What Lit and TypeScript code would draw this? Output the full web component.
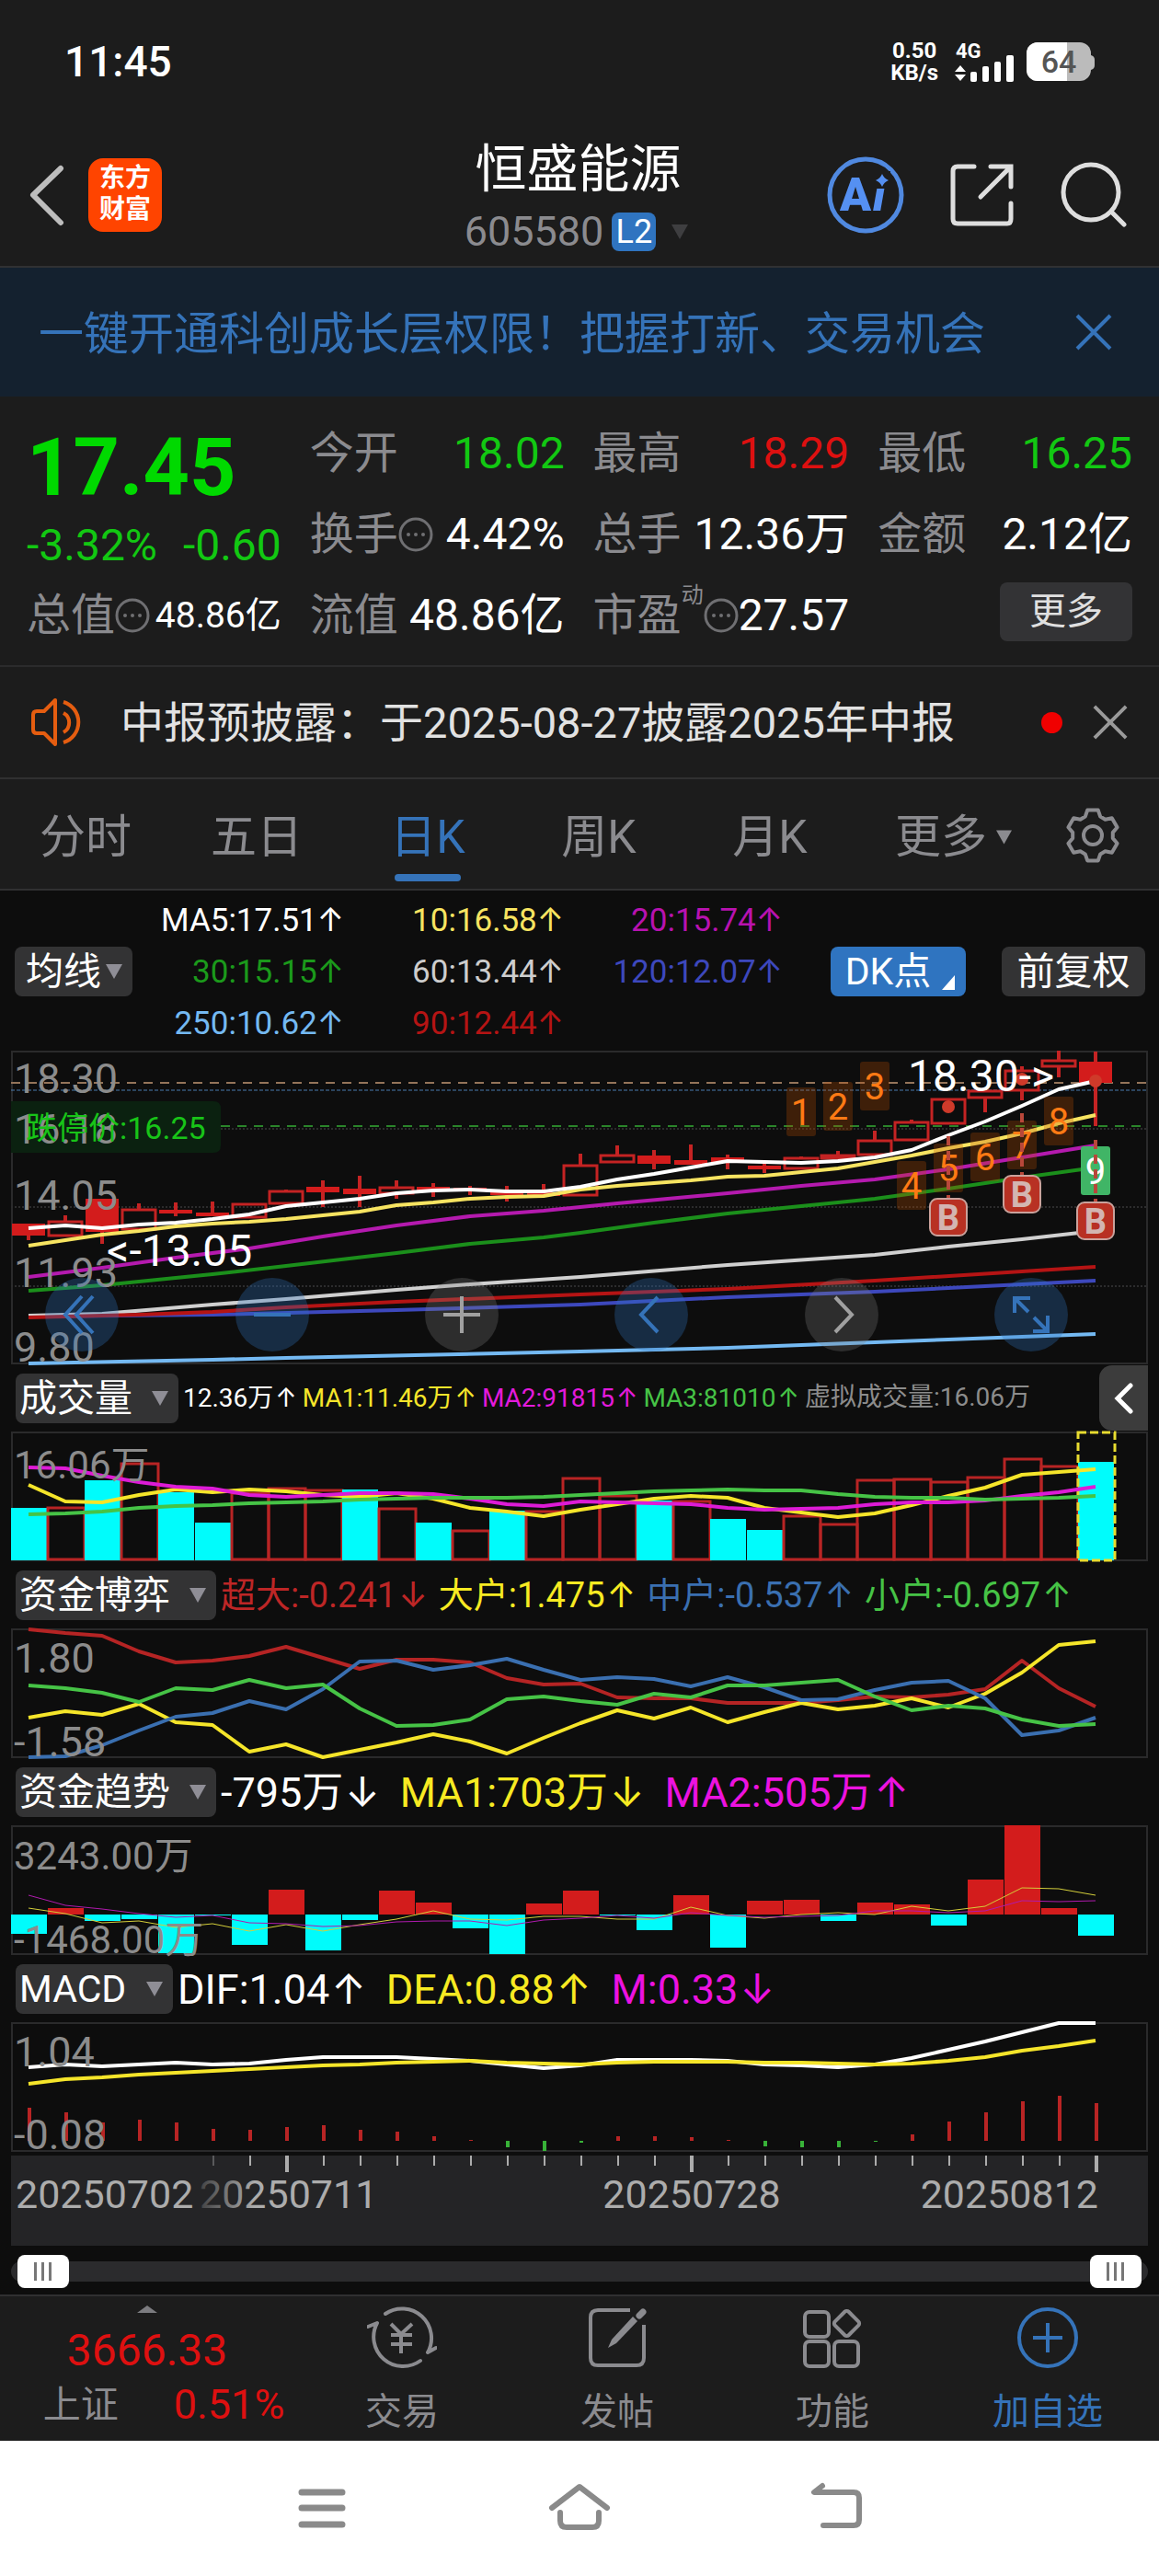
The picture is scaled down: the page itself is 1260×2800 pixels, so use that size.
import { LitElement, html, svg, css, nothing } from "lit";
import { customElement, state } from "lit/decorators.js";

type Candle = [open: number, close: number, high: number, low: number, hollow: 0 | 1];
type Reading = { text: string; arrow?: "↑" | "↓"; tone: string };
type Point = [index: number, y: number];

const STEP = 40;
const FIRST = 19;
const xAt = (i: number) => FIRST + i * STEP;

/* body top, body bottom, wick top, wick bottom, hollow */
const CANDLES: Candle[] = [
  [188, 201, 188, 206, 0], [185, 202, 179, 202, 1], [161, 197, 161, 210, 0], [172, 195, 166, 195, 1],
  [173, 177, 165, 180, 0], [176, 180, 164, 180, 0], [166, 182, 166, 182, 1], [152, 167, 151, 167, 1],
  [148, 154, 141, 170, 0], [150, 156, 136, 170, 0], [148, 156, 141, 161, 1], [148, 152, 144, 159, 0],
  [149, 153, 147, 157, 0], [153, 157, 147, 164, 0], [154, 158, 145, 158, 0], [124, 158, 112, 158, 1],
  [113, 122, 103, 122, 1], [114, 123, 108, 129, 0], [119, 124, 102, 124, 0], [116, 121, 113, 129, 0],
  [125, 129, 121, 133, 0], [116, 129, 115, 129, 1], [113, 118, 109, 118, 1], [97, 114, 87, 114, 1],
  [77, 98, 75, 98, 1], [52, 80, 52, 80, 1], [43, 52, 43, 67, 1], [21, 44, 17, 54, 1],
  [10, 18, 0, 29, 1], [12, 35, 1, 82, 0],
];

const full = (ys: number[]): Point[] => ys.map((y, i) => [i, y]);

const PRICE_LINES: { tone: string; points: Point[] }[] = [
  { tone: "#74b9f2", points: [[0, 340], [5, 336], [7, 334], [15, 327], [19, 323], [25, 314], [29, 308]] },
  { tone: "#3d48bd", points: [[0, 289], [5, 287], [10, 282], [15, 276], [19, 268], [23, 262], [27, 254], [29, 250]] },
  { tone: "#d0d0d0", points: [[0, 288], [2, 286], [5, 276], [7, 270], [10, 260], [12, 254], [15, 246], [19, 233], [23, 222], [25, 213], [27, 205], [29, 196]] },
  { tone: "#b51414", points: [[0, 290], [3, 287], [5, 284], [7, 279], [10, 273], [15, 265], [19, 259], [23, 250], [27, 240], [29, 235]] },
  { tone: "#1b8f1b", points: [[0, 261], [2, 255], [5, 243], [7, 234], [10, 220], [12, 210], [14, 203], [15, 198], [17, 187], [19, 177], [21, 169], [23, 161], [25, 150], [27, 138], [29, 127]] },
  { tone: "#b41aae", points: [[0, 246], [2, 236], [4, 225], [6, 215], [8, 202], [10, 190], [12, 180], [14, 174], [16, 166], [19, 155], [21, 147], [23, 140], [25, 129], [27, 116], [29, 103]] },
  { tone: "#f7e461", points: full([212, 206, 200, 196, 191, 188, 186, 183, 179, 175, 168, 165, 161, 159, 158, 151, 147, 144, 141, 137, 136, 132, 128, 121, 114, 106, 99, 90, 79, 70]) },
  { tone: "#ffffff", points: full([193, 190, 193, 189, 187, 183, 178, 169, 165, 161, 155, 152, 151, 153, 153, 148, 140, 134, 127, 120, 121, 122, 120, 116, 108, 92, 77, 60, 42, 33]) },
];

/* index, label, top of the box */
const COUNTS: [number, string, number][] = [
  [21, "1", 40], [22, "2", 34], [23, "3", 12], [24, "4", 120], [25, "5", 101], [26, "6", 89], [27, "7", 76], [28, "8", 50], [29, "9", 104],
];

/* index, dot y, stem top, badge top */
const BUYS: [number, number, number, number][] = [[25, 61, 93, 160], [27, 31, 68, 135], [29, 33, 97, 164]];

const VOLUME_TOPS = [83, 82, 53, 34, 66, 99, 66, 61, 63, 63, 83, 99, 107, 86, 86, 50, 69, 75, 75, 95, 107, 91, 100, 52, 51, 54, 49, 29, 37, 33];
const VOLUME_DOWN = new Set([0, 2, 4, 5, 9, 11, 13, 17, 19, 20, 29]);
const VOLUME_LINES = [
  { tone: "#f5e52a", points: full([58, 76, 77, 69, 63, 66, 63, 65, 69, 71, 67, 73, 83, 87, 92, 85, 79, 73, 70, 72, 83, 88, 93, 89, 80, 70, 61, 47, 44, 41]) },
  { tone: "#dd1bd6", points: full([39, 40, 48, 55, 60, 62, 69, 71, 69, 67, 67, 68, 73, 79, 81, 76, 77, 78, 79, 83, 85, 84, 83, 79, 77, 77, 75, 70, 66, 60]) },
  { tone: "#46c346", points: full([90, 89, 87, 83, 81, 80, 78, 77, 76, 74, 73, 72, 72, 72, 71, 69, 67, 65, 64, 63, 64, 64, 68, 71, 72, 72, 74, 73, 72, 70]) },
];

const GAME_LINES = [
  { tone: "#b52424", points: full([1, 5, 8, 25, 37, 35, 30, 20, 32, 44, 34, 34, 37, 54, 61, 60, 75, 76, 76, 81, 81, 81, 78, 74, 75, 72, 66, 35, 65, 85]) },
  { tone: "#f5e52a", points: full([97, 90, 94, 82, 102, 105, 134, 126, 140, 132, 124, 115, 123, 136, 119, 103, 89, 98, 86, 102, 91, 81, 88, 84, 76, 86, 71, 48, 18, 14]) },
  { tone: "#3a6fb0", points: full([140, 139, 127, 111, 96, 92, 79, 88, 66, 36, 35, 45, 40, 33, 45, 56, 53, 55, 63, 53, 64, 78, 77, 67, 59, 57, 76, 116, 111, 97]) },
  { tone: "#46c346", points: full([62, 65, 70, 80, 65, 67, 56, 65, 61, 87, 106, 105, 99, 77, 74, 79, 83, 71, 75, 62, 62, 59, 56, 74, 89, 84, 87, 99, 106, 104]) },
];

const TREND_ZERO = 97;
const TREND_BARS = [118, 90, 104, 102, 139, 98, 130, 70, 136, 103, 71, 84, 112, 140, 85, 71, 98, 114, 76, 133, 82, 81, 104, 84, 86, 109, 59, 0, 90, 120];
const TREND_LINES = [
  { tone: "#d4cf3a", points: full([90, 96, 106, 104, 111, 107, 115, 108, 115, 108, 102, 93, 102, 103, 99, 99, 102, 102, 89, 98, 101, 97, 95, 97, 88, 93, 88, 68, 69, 76]) },
  { tone: "#b01aae", points: full([76, 87, 91, 96, 100, 98, 106, 107, 110, 109, 105, 104, 104, 109, 103, 101, 98, 101, 95, 98, 100, 99, 98, 93, 93, 95, 93, 82, 83, 82]) },
];

const MACD_ZERO = 129;
const MACD_BARS = [93, 98, 109, 106, 109, 116, 117, 114, 112, 117, 119, 124, 128, 136, 140, 131, 124, 124, 125, 128, 135, 136, 136, 130, 122, 108, 98, 86, 80, 88];
const MACD_LINES = [
  { tone: "#ffffff", points: full([49, 46, 48, 46, 44, 46, 45, 41, 38, 38, 38, 40, 42, 46, 50, 47, 41, 41, 41, 42, 46, 47, 49, 46, 39, 30, 21, 11, 1, 1]) },
  { tone: "#f5e52a", points: full([67, 62, 60, 57, 55, 53, 51, 49, 47, 46, 44, 43, 42, 44, 45, 46, 44, 43, 43, 43, 44, 44, 45, 46, 45, 42, 38, 31, 26, 20]) },
];

const AVERAGES: Reading[] = [
  { text: "MA5:17.51", tone: "#ffffff" }, { text: "10:16.58", tone: "#f7e461" }, { text: "20:15.74", tone: "#b812b0" },
  { text: "30:15.15", tone: "#1b9a1b" }, { text: "60:13.44", tone: "#cdcdcd" }, { text: "120:12.07", tone: "#3d48bd" },
  { text: "250:10.62", tone: "#74b9f2" }, { text: "90:12.44", tone: "#b51414" },
];

const TABS = ["分时", "五日", "日K", "周K", "月K", "更多"];

const gearPath = (() => {
  const pts: string[] = [];
  const at = (r: number, deg: number) => {
    const a = (deg * Math.PI) / 180;
    return `${(31 + r * Math.cos(a)).toFixed(1)} ${(31 + r * Math.sin(a)).toFixed(1)}`;
  };
  for (let k = 0; k < 6; k++) {
    const a = -90 + k * 60;
    pts.push(at(22, a - 22), at(28, a - 12), at(28, a + 12), at(22, a + 22));
  }
  return `M${pts.join("L")}Z`;
})();

const line = (l: { tone: string; points: Point[] }, width = 4) => svg`
  <polyline fill="none" stroke=${l.tone} stroke-width=${width} stroke-linejoin="round"
    points=${l.points.map(([i, y]) => `${xAt(i)},${y}`).join(" ")}></polyline>`;

const frame = (h: number) => svg`<rect class="frame" x="1" y="1" width="1234" height=${h - 2}></rect>`;

const caret = html`<svg class="caret" viewBox="0 0 18 16" aria-hidden="true"><path d="M0 0H18L9 16Z"></path></svg>`;
const more = html`<svg class="dots" viewBox="0 0 38 38" aria-hidden="true">
  <circle cx="19" cy="19" r="17" fill="none" stroke="currentColor" stroke-width="3"></circle>
  <circle cx="11" cy="19" r="2"></circle><circle cx="19" cy="19" r="2"></circle><circle cx="27" cy="19" r="2"></circle>
</svg>`;

@customElement("app-root")
export class AppRoot extends LitElement {
  @state() private tab = "日K";
  @state() private bannerOpen = true;
  @state() private noticeOpen = true;

  static styles = css`
    :host {
      display: block;
      background: #1c1c1c;
      color: #fff;
      font-family: Roboto, "Noto Sans CJK SC", sans-serif;
      font-size: 48px;
      line-height: 1;
    }
    * { box-sizing: border-box; }
    button, select { font: inherit; color: inherit; background: none; border: 0; padding: 0; margin: 0; cursor: pointer; }
    a { color: inherit; text-decoration: none; }
    svg { display: block; flex: none; }
    .green { color: #12c812; }
    .red { color: #de1010; }

    .status { display: flex; align-items: center; height: 134px; padding: 0 70px; }
    .clock { font-size: 46px; font-weight: 500; flex: 1; }
    .net { font-size: 24px; line-height: 24px; font-weight: 700; text-align: center; margin-right: 18px; }
    .signal { width: 66px; height: 44px; margin-right: 12px; overflow: visible; }
    .battery { width: 74px; height: 44px; }

    .head { display: grid; grid-template-columns: 1fr auto 1fr; align-items: center; height: 157px; padding: 0 35px 0 32px; border-bottom: 2px solid #303133; }
    .head .side { display: flex; align-items: center; }
    .head .right { justify-content: flex-end; gap: 50px; }
    .back { width: 44px; height: 70px; }
    .logo { width: 80px; height: 80px; margin-left: 20px; border-radius: 16px; background: #ff4400; font-size: 28px; line-height: 34px; font-weight: 700; text-align: center; padding: 5px 10px; }
    .title { text-align: center; padding-top: 12px; }
    h1 { margin: 0; font-size: 56px; line-height: 68px; font-weight: 400; }
    .code { display: flex; align-items: center; justify-content: center; gap: 9px; height: 68px; font-size: 45px; color: #8b8b8f; }
    .level { background: #2f74c0; color: #fff; border-radius: 8px; width: 48px; height: 42px; font-size: 36px; line-height: 42px; text-align: center; }
    .code .caret { width: 26px; height: 16px; margin-left: 4px; fill: #3e3e40; }
    .ai { width: 84px; height: 84px; }
    .ai text { font-weight: 900; font-size: 50px; }
    .share { width: 70px; height: 72px; }
    .find { width: 72px; height: 72px; }

    .banner { display: flex; align-items: center; justify-content: space-between; height: 140px; padding: 0 50px 0 42px; background: #14212f; color: #3573b9; font-size: 49px; }
    .banner a { padding-top: 5px; }
    .banner svg { width: 42px; height: 42px; }

    .quote { display: grid; grid-template-columns: repeat(4, 1fr); grid-template-rows: repeat(3, 88px); column-gap: 31px; padding: 18px 29px 10px; }
    .price { grid-row: span 2; display: flex; flex-direction: column; white-space: nowrap; }
    .last { font-size: 88px; font-weight: 700; line-height: 118px; color: #00d900; }
    .change { display: flex; justify-content: space-between; font-size: 48px; line-height: 52px; }
    .cell { display: flex; align-items: center; color: #8b8b8f; white-space: nowrap; }
    .cell b { font-weight: 400; margin-left: auto; color: #fff; }
    .cell b.green { color: #12c812; }
    .cell b.red { color: #de1010; }
    .cell.small b { font-size: 39px; }
    .cell sup { font-size: 24px; align-self: flex-start; margin-top: 10px; }
    .dots { width: 38px; height: 38px; fill: #6f6f72; color: #6f6f72; }
    .moredata { justify-self: end; margin-top: 8px; width: 144px; height: 64px; border-radius: 8px; background: #333335; color: #e0e0e0; font-size: 40px; }

    .notice { display: flex; align-items: center; height: 124px; padding: 0 33px; border-top: 2px solid #2b2b2c; border-bottom: 2px solid #303031; color: #e2e2e2; font-size: 47px; }
    .notice .horn { width: 62px; height: 54px; margin-right: 36px; }
    .notice a { flex: 1; white-space: nowrap; }
    .notice i { width: 23px; height: 23px; border-radius: 50%; background: #f00000; margin-right: 32px; }
    .notice .x { width: 40px; height: 40px; }

    .tabs { display: grid; grid-template-columns: repeat(6, 186fr) 144fr; height: 121px; border-bottom: 2px solid #303031; color: #8b8b8f; font-size: 50px; }
    .tabs button { display: flex; justify-content: center; align-items: center; position: relative; padding-top: 6px; }
    .tabs button:last-child { padding-top: 2px; }
    .tabs button[aria-selected="true"] { color: #3573b9; }
    .tabs button[aria-selected="true"]::after { content: ""; position: absolute; left: 57px; right: 57px; bottom: 8px; height: 8px; border-radius: 4px; background: #3573b9; }
    .tabs .caret { width: 17px; height: 16px; margin: 0 -27px 0 10px; fill: #8b8b8f; }
    .gear { width: 62px; height: 62px; }

    .charts { background: #0d0d0d; padding: 0 12px 2px; overflow: hidden; }
    .tools { display: flex; align-items: center; height: 174px; padding: 2px 3px 0 4px; }
    .averages { display: grid; grid-template-columns: 230px 239px 238px; grid-auto-rows: 56px; align-items: center; flex: 1; font-size: 35px; }
    .averages span { text-align: right; white-space: nowrap; }
    .arrow { font-family: Inter, sans-serif; margin-left: 2px; }
    .averages .arrow { margin-left: 0; }
    .pick { display: inline-grid; align-items: center; height: 54px; border-radius: 8px; background: #333334; color: #fff; font-size: 41px; flex: none; }
    .pick > * { grid-area: 1 / 1; }
    .pick select { appearance: none; height: 54px; line-height: 54px; padding: 0 50px 0 4px; outline: none; }
    .pick.tight select { padding: 0 34px 0 12px; }
    .pick .caret { width: 18px; height: 16px; fill: #8f8e96; justify-self: end; margin-right: 11px; pointer-events: none; }
    .pill { display: flex; align-items: center; justify-content: center; height: 54px; width: 156px; border-radius: 8px; background: #333334; font-size: 41px; white-space: nowrap; }
    .pill.dk { width: 147px; background: #2f74c0; margin-right: 39px; gap: 12px; padding-left: 4px; }
    .pill.dk svg { width: 14px; height: 16px; align-self: flex-end; margin-bottom: 7px; }

    .plot { position: relative; }
    .plot svg.canvas { width: 100%; height: auto; overflow: visible; }
    .frame { fill: none; stroke: #2a2a2b; stroke-width: 2; }
    .scale { fill: #8c8c8c; font-size: 45px; }
    .scale.wan { font-size: 42px; }
    .note { fill: #fff; font-size: 48px; }
    .controls { position: absolute; left: 3%; right: 7%; bottom: 4%; display: flex; justify-content: space-between; }
    .controls button { width: 80px; height: 80px; border-radius: 50%; background: rgba(47, 116, 192, 0.3); color: #3573b9; display: grid; place-content: center; }
    .controls button.grey { background: rgba(130, 130, 130, 0.28); color: #a0a0a0; }
    .controls svg { width: 44px; height: 44px; }

    .legend { display: flex; align-items: center; height: 73px; padding-left: 5px; white-space: nowrap; font-size: 45px; }
    .legend .readings { display: flex; gap: 22px; padding-left: 5px; flex: 1; }
    .legend.mid { font-size: 38px; }
    .legend.mid .readings { gap: 12px; }
    .legend.slim { font-size: 28px; }
    .legend.slim .readings { gap: 6px; }
    .fold { width: 53px; height: 71px; border-radius: 14px 0 0 14px; background: #3c3c3c; display: grid; place-content: center; }
    .fold svg { width: 30px; height: 44px; }

    .axis { margin-top: 4px; background: #242426; }
    .axis text { fill: #acacac; font-size: 43px; }
    .range { display: grid; align-items: center; height: 46px; margin-top: 5px; padding: 0 7px; }
    .range > * { grid-area: 1 / 1; }
    .track { height: 22px; border-radius: 11px; background: #2b2b2d; margin: 0 -7px; }
    .range input { appearance: none; width: 100%; height: 36px; margin: 0; background: none; pointer-events: none; }
    .range input::-webkit-slider-thumb {
      appearance: none; width: 56px; height: 36px; border-radius: 8px; pointer-events: auto;
      background: linear-gradient(90deg, #777 3px, transparent 3px 8px, #777 8px 11px, transparent 11px 16px, #777 16px 19px, transparent 19px) 18px 8px / 20px 20px no-repeat #fff;
    }

    .dock { display: grid; grid-template-columns: 320fr repeat(4, 234fr) 4fr; height: 159px; border-top: 2px solid #303031; color: #8b8b8f; font-size: 41px; }
    .index { display: grid; justify-items: center; align-content: start; padding-top: 10px; }
    .index .up { width: 22px; height: 8px; fill: #7c7c80; }
    .index strong { font-size: 48px; font-weight: 400; line-height: 48px; margin-top: 17px; }
    .index p { display: flex; gap: 60px; margin: 14px 0 0; padding-left: 36px; line-height: 42px; }
    .index p .red { font-size: 45px; }
    .dock a.item { display: grid; justify-items: center; align-content: start; gap: 24px; padding-top: 10px; font-size: 40px; }
    .dock a.item svg { width: 76px; height: 72px; }
    .dock a.add { color: #3573b9; }

    .system { display: flex; justify-content: center; align-items: center; gap: 200px; height: 147px; background: #fff; }
    .system button { padding-bottom: 4px; }
    .system svg { width: 80px; height: 60px; }
  `;

  private reading(r: Reading) {
    return html`<span style="color:${r.tone}">${r.text}${r.arrow ? html`<span class="arrow">${r.arrow}</span>` : nothing}</span>`;
  }

  private pick(name: string, tight = false) {
    return html`<label class="pick ${tight ? "tight" : ""}"><select aria-label=${name}><option>${name}</option></select>${caret}</label>`;
  }

  private closeIcon(tone: string) {
    return html`<svg viewBox="0 0 42 42" aria-hidden="true"><path d="M3 3L39 39M39 3L3 39" fill="none" stroke=${tone} stroke-width="4"></path></svg>`;
  }

  private header() {
    return html`
      <div class="status">
        <time class="clock">11:45</time>
        <div class="net">0.50<br />KB/s</div>
        <svg class="signal" viewBox="0 0 66 44" aria-label="4G">
          <text x="1" y="18" font-size="22" font-weight="700" fill="#fff">4G</text>
          <path fill="#fff" d="M0 33L6 26L12 33ZM0 36L6 43L12 36Z"></path>
          <g fill="#fff"><rect x="17" y="33" width="7" height="11" rx="2"></rect><rect x="30" y="27" width="7" height="17" rx="2"></rect>
          <rect x="43" y="22" width="7" height="22" rx="2"></rect><rect x="56" y="15" width="8" height="29" rx="2"></rect></g>
        </svg>
        <svg class="battery" viewBox="0 0 74 44" aria-label="64%">
          <path d="M12 1H58A12 12 0 0 1 70 13V31A12 12 0 0 1 58 43H12A12 12 0 0 1 0 31V13A12 12 0 0 1 12 1Z" fill="#bbb"></path>
          <path d="M12 1H44V43H12A12 12 0 0 1 0 31V13A12 12 0 0 1 12 1Z" fill="#fff"></path>
          <path d="M70 15Q74 16 74 20V26Q74 30 70 31Z" fill="#bbb"></path>
          <text x="35" y="34" text-anchor="middle" font-size="34" font-weight="500" fill="#555">64</text>
        </svg>
      </div>
      <header class="head">
        <div class="side">
          <button aria-label="返回"><svg class="back" viewBox="0 0 44 70" fill="none" stroke="#bdbdbd" stroke-width="6" stroke-linecap="round" stroke-linejoin="round"><path d="M34 6L4 35L34 65"></path></svg></button>
          <div class="logo">东方<br />财富</div>
        </div>
        <div class="title">
          <h1>恒盛能源</h1>
          <div class="code"><span>605580</span><span class="level">L2</span>${caret}</div>
        </div>
        <div class="side right">
          <button aria-label="智能助手"><svg class="ai" viewBox="0 0 84 84" fill="#5590f2">
            <circle cx="42" cy="42" r="39" fill="none" stroke="#5089e0" stroke-width="5"></circle>
            <text x="14" y="59">A<tspan x="50" font-style="italic">i</tspan></text>
            <rect x="49" y="16" width="20" height="19" fill="#1c1c1c"></rect>
            <path d="M60 19Q62 24 67 26Q62 28 60 33Q58 28 53 26Q58 24 60 19Z"></path>
          </svg></button>
          <button aria-label="分享"><svg class="share" viewBox="0 0 70 72" fill="none" stroke="#dedede" stroke-width="5" stroke-linecap="round">
            <path d="M26 5H8Q3 5 3 10V62Q3 67 8 67H62Q66 67 66 62V45"></path><path d="M44 5H66V27M65 6L33 38"></path>
          </svg></button>
          <button aria-label="搜索"><svg class="find" viewBox="0 0 72 72" fill="none" stroke="#dedede" stroke-width="5" stroke-linecap="round">
            <circle cx="33" cy="33" r="30"></circle><path d="M55 54L69 68"></path>
          </svg></button>
        </div>
      </header>`;
  }

  private quote() {
    return html`
      <section class="quote">
        <div class="price">
          <span class="last">17.45</span>
          <span class="change green"><span>-3.32%</span><span>-0.60</span></span>
        </div>
        <div class="cell">今开<b class="green">18.02</b></div>
        <div class="cell">最高<b class="red">18.29</b></div>
        <div class="cell">最低<b class="green">16.25</b></div>
        <div class="cell">换手${more}<b>4.42%</b></div>
        <div class="cell">总手<b>12.36万</b></div>
        <div class="cell">金额<b>2.12亿</b></div>
        <div class="cell small">总值${more}<b>48.86亿</b></div>
        <div class="cell">流值<b>48.86亿</b></div>
        <div class="cell">市盈<sup>动</sup>${more}<b>27.57</b></div>
        <button class="moredata">更多</button>
      </section>`;
  }

  private priceChart() {
    return html`<div class="plot">
      <svg class="canvas" viewBox="0 0 1236 341" role="img" aria-label="日K线">
        ${frame(341)}
        <g stroke="#2c2c2d" stroke-width="2" stroke-dasharray="2 2"><path d="M0 85H1236M0 170H1236M0 256H1236"></path></g>
        <path d="M0 35H1236" stroke="#94745a" stroke-width="2" stroke-dasharray="10 8"></path>
        <path d="M0 43H1236" stroke="#4a7cb0" stroke-width="1" stroke-dasharray="4 2"></path>
        <path d="M228 82H1236" stroke="#2a842a" stroke-width="2" stroke-dasharray="10 8"></path>
        <path d="M0 55H220Q228 55 228 63V103Q228 111 220 111H0Z" fill="#0b2110"></path>
        ${CANDLES.map(([top, bottom, high, low, hollow], i) => {
          const x = xAt(i);
          return hollow
            ? svg`<path d="M${x} ${high}V${top}M${x} ${bottom}V${low}" stroke="#c42323" stroke-width="4"></path>
                <rect x=${x - 18} y=${top + 1} width="36" height=${Math.max(bottom - top - 2, 2)} fill="none" stroke="#c42323" stroke-width="3"></rect>`
            : svg`<path d="M${x} ${high}V${low}" stroke="#c42323" stroke-width="4"></path>
                <rect x=${x - 18} y=${top} width="36" height=${bottom - top} fill="#d31c1c"></rect>`;
        })}
        ${PRICE_LINES.map((l) => line(l))}
        <g class="scale">
          <text x="3" y="46">18.30</text><text x="3" y="101">16.18</text><text x="3" y="173">14.05</text>
          <text x="3" y="257">11.93</text><text x="3" y="338">9.80</text>
        </g>
        <text x="16" y="96" font-size="34" fill="#18c418">跌停价:16.25</text>
        ${COUNTS.map(([i, n, top]) => svg`
          <rect x=${xAt(i) - 16} y=${top} width="32" height="53" rx="3" fill=${n === "9" ? "#40b566" : "rgba(190, 80, 0, 0.28)"}></rect>
          <text x=${xAt(i)} y=${top + 41} text-anchor="middle" font-size="40" fill=${n === "9" ? "#fff" : "#ff7a14"}>${n}</text>`)}
        ${BUYS.map(([i, dot, stem, top]) => svg`
          <circle cx=${xAt(i)} cy=${dot} r="7" fill="#cf3a2a"></circle>
          <path d="M${xAt(i)} ${stem}V${top}" stroke="#b8473a" stroke-width="4" stroke-dasharray="10 6"></path>
          <rect x=${xAt(i) - 20} y=${top + 1} width="40" height="40" rx="8" fill="#b83123" stroke="#c9a29c" stroke-width="2"></rect>
          <text x=${xAt(i)} y=${top + 35} text-anchor="middle" font-size="38" font-weight="700" fill="#d3b5b1">B</text>`)}
        <text class="note" x="104" y="234">&lt;-13.05</text>
        <text class="note" x="1134" y="44" text-anchor="end">18.30-&gt;</text>
      </svg>
      <div class="controls">
        <button aria-label="最早"><svg viewBox="0 0 44 44" fill="none" stroke="currentColor" stroke-width="4"><path d="M22 2L4 22L22 42M34 2L16 22L34 42"></path></svg></button>
        <button aria-label="缩小"><svg viewBox="0 0 44 44" stroke="currentColor" stroke-width="4"><path d="M2 22H42"></path></svg></button>
        <button class="grey" aria-label="放大"><svg viewBox="0 0 44 44" stroke="currentColor" stroke-width="4"><path d="M2 22H42M22 2V42"></path></svg></button>
        <button aria-label="前移"><svg viewBox="0 0 44 44" fill="none" stroke="currentColor" stroke-width="4"><path d="M29 3L11 22L29 41"></path></svg></button>
        <button class="grey" aria-label="后移"><svg viewBox="0 0 44 44" fill="none" stroke="currentColor" stroke-width="4"><path d="M15 3L33 22L15 41"></path></svg></button>
        <button aria-label="全屏"><svg viewBox="0 0 44 44" fill="none" stroke="currentColor" stroke-width="4"><path d="M4 20V4H21M5 5L19 19M24 40H40V23M39 39L25 25"></path></svg></button>
      </div>
    </div>`;
  }

  private volumeChart() {
    return html`<div class="plot"><svg class="canvas" viewBox="0 0 1236 141" role="img" aria-label="成交量">
      ${frame(141)}
      ${VOLUME_TOPS.map((top, i) =>
        VOLUME_DOWN.has(i)
          ? svg`<rect x=${xAt(i) - 19} y=${top} width="39" height=${140 - top} fill="#00fcfc"></rect>`
          : svg`<rect x=${xAt(i) - 19} y=${top + 1} width="40" height=${138 - top} fill="none" stroke="#b82424" stroke-width="3"></rect>`,
      )}
      <rect x="1160" y="1" width="40" height="139" fill="none" stroke="#e8dc30" stroke-width="3" stroke-dasharray="9 4"></rect>
      ${VOLUME_LINES.map((l) => line(l))}
      <text class="scale wan" x="3" y="51">16.06万</text>
    </svg></div>`;
  }

  private gameChart() {
    return html`<div class="plot"><svg class="canvas" viewBox="0 0 1236 141" role="img" aria-label="资金博弈">
      ${frame(141)}${GAME_LINES.map((l) => line(l))}
      <text class="scale" x="3" y="48">1.80</text><text class="scale" x="3" y="139">-1.58</text>
    </svg></div>`;
  }

  private trendChart() {
    return html`<div class="plot"><svg class="canvas" viewBox="0 0 1236 141" role="img" aria-label="资金趋势">
      ${frame(141)}
      ${TREND_BARS.map((end, i) => svg`<rect x=${xAt(i) - 19} y=${Math.min(end, TREND_ZERO)} width="39"
        height=${Math.abs(end - TREND_ZERO)} fill=${end < TREND_ZERO ? "#d31c1c" : "#00fcfc"}></rect>`)}
      ${TREND_LINES.map((l) => line(l, 1))}
      <text class="scale wan" x="3" y="48">3243.00万</text><text class="scale wan" x="3" y="139">-1468.00万</text>
    </svg></div>`;
  }

  private macdChart() {
    return html`<div class="plot"><svg class="canvas" viewBox="0 0 1236 141" role="img" aria-label="MACD">
      ${frame(141)}
      ${MACD_BARS.map((end, i) => svg`<rect x=${xAt(i) - 1} y=${Math.min(end, MACD_ZERO)} width="4"
        height=${Math.abs(end - MACD_ZERO)} fill=${end < MACD_ZERO ? "#b82424" : "#38b238"}></rect>`)}
      ${MACD_LINES.map((l) => line(l))}
      <text class="scale" x="3" y="48">1.04</text><text class="scale" x="3" y="138">-0.08</text>
    </svg></div>`;
  }

  private axis() {
    const ticks = Array.from({ length: 25 }, (_, k) => k + 5);
    return html`<div class="axis plot"><svg class="canvas" viewBox="0 0 1236 98" role="img" aria-label="日期">
      <defs><linearGradient id="fade"><stop offset="0" stop-color="#242426" stop-opacity="0.8"></stop><stop offset="1" stop-color="#242426" stop-opacity="0"></stop></linearGradient></defs>
      ${ticks.map((i) => {
        const major = i % 11 === 7;
        return svg`<rect x=${xAt(i) - (major ? 1 : 0)} y="0" width=${major ? 4 : 2} height=${major ? 18 : 11}
          fill=${i === 5 ? "#5a5a5c" : "#acacac"}></rect>`;
      })}
      <text x="5" y="57">20250702</text>
      <text x="205" y="57">20250711</text>
      <rect x="203" y="20" width="62" height="44" fill="url(#fade)"></rect>
      <text x="740" y="57" text-anchor="middle">20250728</text>
      <text x="1182" y="57" text-anchor="end">20250812</text>
    </svg></div>`;
  }

  private charts() {
    return html`<main class="charts">
      <div class="tools">
        ${this.pick("均线", true)}
        <div class="averages">${AVERAGES.map((a) => this.reading({ ...a, arrow: "↑" }))}</div>
        <button class="pill dk">DK点<svg viewBox="0 0 14 16" aria-hidden="true"><path d="M14 0V16H0Z" fill="#fff"></path></svg></button>
        <button class="pill">前复权</button>
      </div>
      ${this.priceChart()}
      <div class="legend slim">
        ${this.pick("成交量")}
        <div class="readings">
          ${[
            { text: "12.36万", arrow: "↑", tone: "#ffffff" },
            { text: "MA1:11.46万", arrow: "↑", tone: "#f5e52a" },
            { text: "MA2:91815", arrow: "↑", tone: "#e31adc" },
            { text: "MA3:81010", arrow: "↑", tone: "#46c346" },
            { text: "虚拟成交量:16.06万", tone: "#8c8c8c" },
          ].map((r) => this.reading(r as Reading))}
        </div>
        <button class="fold" aria-label="收起"><svg viewBox="0 0 30 44" fill="none" stroke="#fff" stroke-width="5" stroke-linecap="round"><path d="M22 8L8 22L22 36"></path></svg></button>
      </div>
      ${this.volumeChart()}
      <div class="legend mid">
        ${this.pick("资金博弈")}
        <div class="readings">
          ${[
            { text: "超大:-0.241", arrow: "↓", tone: "#bd2626" },
            { text: "大户:1.475", arrow: "↑", tone: "#f7ea22" },
            { text: "中户:-0.537", arrow: "↑", tone: "#3a6fb0" },
            { text: "小户:-0.697", arrow: "↑", tone: "#46c346" },
          ].map((r) => this.reading(r as Reading))}
        </div>
      </div>
      ${this.gameChart()}
      <div class="legend">
        ${this.pick("资金趋势")}
        <div class="readings">
          ${[
            { text: "-795万", arrow: "↓", tone: "#ffffff" },
            { text: "MA1:703万", arrow: "↓", tone: "#f7ea22" },
            { text: "MA2:505万", arrow: "↑", tone: "#ec12e0" },
          ].map((r) => this.reading(r as Reading))}
        </div>
      </div>
      ${this.trendChart()}
      <div class="legend">
        ${this.pick("MACD")}
        <div class="readings">
          ${[
            { text: "DIF:1.04", arrow: "↑", tone: "#ffffff" },
            { text: "DEA:0.88", arrow: "↑", tone: "#f7ea22" },
            { text: "M:0.33", arrow: "↓", tone: "#ec12e0" },
          ].map((r) => this.reading(r as Reading))}
        </div>
      </div>
      ${this.macdChart()}
      ${this.axis()}
      <div class="range">
        <div class="track"></div>
        <input type="range" aria-label="起始日期" min="0" max="29" value="0" />
        <input type="range" aria-label="结束日期" min="0" max="29" value="29" />
      </div>
    </main>`;
  }

  private dock() {
    return html`<nav class="dock">
      <a class="index" href="#index">
        <svg class="up" viewBox="0 0 22 8" aria-hidden="true"><path d="M11 0L22 8H0Z"></path></svg>
        <strong class="red">3666.33</strong>
        <p><span>上证</span><span class="red">0.51%</span></p>
      </a>
      <a class="item" href="#trade"><svg viewBox="0 0 76 72" fill="none" stroke="currentColor" stroke-width="4" stroke-linecap="round" stroke-linejoin="round">
        <path d="M20 9A32 32 0 0 1 66 51L75 46"></path><path d="M58 60A32 32 0 0 1 11 19L1 23"></path>
        <path d="M26 20L37 31L49 20M37 31V52M26 32H49M26 42H49" stroke-linecap="butt"></path></svg>交易</a>
      <a class="item" href="#post"><svg viewBox="0 0 76 72" fill="none" stroke="currentColor" stroke-width="4">
        <path d="M52 5H17Q9 5 9 13V57Q9 65 17 65H59Q67 65 67 57V21"></path>
        <path d="M55 12L60 17L37 41L28 46L32 37Z" fill="currentColor" stroke="none"></path>
        <path d="M62 11L66 7" stroke-width="7" stroke-linecap="round"></path></svg>发帖</a>
      <a class="item" href="#tools"><svg viewBox="0 0 76 72" fill="none" stroke="currentColor" stroke-width="4">
        <rect x="8" y="7" width="26" height="27" rx="5"></rect><rect x="8" y="39" width="26" height="27" rx="5"></rect><rect x="40" y="39" width="26" height="27" rx="5"></rect>
        <rect x="43" y="9" width="21" height="21" rx="3" transform="rotate(45 53.500 19.500)"></rect></svg>功能</a>
      <a class="item add" href="#add"><svg viewBox="0 0 76 72" fill="none" stroke="currentColor" stroke-width="4">
        <circle cx="38" cy="35" r="31"></circle><path d="M22 35H54M38 19V51"></path></svg>加自选</a>
    </nav>
    <div class="system">
      <button aria-label="任务"><svg viewBox="0 0 80 60" fill="none" stroke="#8a8a8a" stroke-width="7" stroke-linecap="round"><path d="M18 14H62M18 31H62M18 49H62"></path></svg></button>
      <button aria-label="主页"><svg viewBox="0 0 80 60" fill="none" stroke="#8a8a8a" stroke-width="6" stroke-linecap="round" stroke-linejoin="round"><path d="M10 31L40 8L70 31M19 36V45Q19 52 26 52H54Q61 52 61 45V36"></path></svg></button>
      <button aria-label="返回"><svg viewBox="0 0 80 60" fill="none" stroke="#8a8a8a" stroke-width="6" stroke-linecap="round" stroke-linejoin="round"><path d="M24 7L15 14H58Q64 14 64 20V44Q64 50 58 50H25"></path></svg></button>
    </div>`;
  }

  render() {
    return html`
      ${this.header()}
      ${this.bannerOpen
        ? html`<div class="banner"><a href="#open">一键开通科创成长层权限！把握打新、交易机会</a>
            <button aria-label="关闭" @click=${() => (this.bannerOpen = false)}>${this.closeIcon("#3573b9")}</button></div>`
        : nothing}
      ${this.quote()}
      ${this.noticeOpen
        ? html`<div class="notice">
            <svg class="horn" viewBox="0 0 62 54" fill="none" stroke="#e55d10" stroke-width="4" stroke-linejoin="round">
              <path d="M27 3V51L15 39H7Q3 39 3 35V19Q3 15 7 15H15Z"></path><path d="M36 17A12 12 0 0 1 36 38M36 5A23 23 0 0 1 36 49"></path></svg>
            <a href="#report">中报预披露：于2025-08-27披露2025年中报</a><i></i>
            <button class="x" aria-label="关闭" @click=${() => (this.noticeOpen = false)}>${this.closeIcon("#9a9a9a")}</button></div>`
        : nothing}
      <div class="tabs" role="tablist">
        ${TABS.map((t) => html`<button role="tab" aria-selected=${t === this.tab ? "true" : "false"} @click=${() => (this.tab = t)}>${t}${t === "更多" ? caret : nothing}</button>`)}
        <button aria-label="设置"><svg class="gear" viewBox="0 0 62 62" fill="none" stroke="#8b8b8f" stroke-width="4" stroke-linejoin="round"><path d=${gearPath}></path><circle cx="31" cy="31" r="10"></circle></svg></button>
      </div>
      ${this.charts()}
      ${this.dock()}`;
  }
}
